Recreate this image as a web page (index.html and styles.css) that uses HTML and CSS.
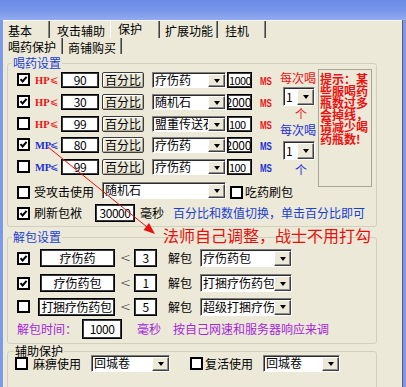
FILE: index.html
```html
<!DOCTYPE html>
<html>
<head>
<meta charset="utf-8">
<link rel="stylesheet" href="styles.css">
</head>
<body>
<div class="win">
  <div class="titlebar"></div>
  <div class="frame">
    <div class="edge-l"></div>
    <div class="client">
      <div class="tabrow r1">
        <div class="tab t1">基本</div>
        <div class="tab t2">攻击辅助</div>
        <div class="tab t3 sel">保护</div>
        <div class="tab t4">扩展功能</div>
        <div class="tab t5">挂机</div>
      </div>
      <div class="tabrow r2">
        <div class="tab s1 sel">喝药保护</div>
        <div class="tab s2">商铺购买</div>
      </div>
      <div class="panel">
        <fieldset class="grp g1">
          <legend class="blue">喝药设置</legend>
          <div class="g1top">
            <div class="lcol">
              <div class="prow h22">
                <span class="cb on"><svg viewBox="0 0 9 9"><path d="M1.5 4.2 L3.6 6.5 L7.6 1.8"/></svg></span>
                <span class="lbl red"><b>HP</b><i>⩽</i></span>
                <span class="inp pct">90</span>
                <span class="btn">百分比</span>
                <span class="combo wc"><span class="val">疗伤药</span><span class="arr"></span></span>
                <span class="inp ms">1000</span>
                <span class="unit red"><b>MS</b></span>
              </div>
              <div class="prow h22">
                <span class="cb on"><svg viewBox="0 0 9 9"><path d="M1.5 4.2 L3.6 6.5 L7.6 1.8"/></svg></span>
                <span class="lbl red"><b>HP</b><i>⩽</i></span>
                <span class="inp pct">30</span>
                <span class="btn">百分比</span>
                <span class="combo wc"><span class="val">随机石</span><span class="arr"></span></span>
                <span class="inp ms scroll">2000</span>
                <span class="unit red"><b>MS</b></span>
              </div>
              <div class="prow h21">
                <span class="cb"></span>
                <span class="lbl red"><b>HP</b><i>⩽</i></span>
                <span class="inp pct">99</span>
                <span class="btn">百分比</span>
                <span class="combo wc"><span class="val">盟重传送石</span><span class="arr"></span></span>
                <span class="inp ms">100</span>
                <span class="unit red"><b>MS</b></span>
              </div>
              <div class="prow h22">
                <span class="cb on"><svg viewBox="0 0 9 9"><path d="M1.5 4.2 L3.6 6.5 L7.6 1.8"/></svg></span>
                <span class="lbl blue2"><b>MP</b><i>⩽</i></span>
                <span class="inp pct">80</span>
                <span class="btn">百分比</span>
                <span class="combo wc"><span class="val">疗伤药</span><span class="arr"></span></span>
                <span class="inp ms scroll">2000</span>
                <span class="unit blue2"><b>MS</b></span>
              </div>
              <div class="prow h23">
                <span class="cb"></span>
                <span class="lbl blue2"><b>MP</b><i>⩽</i></span>
                <span class="inp pct">99</span>
                <span class="btn">百分比</span>
                <span class="combo wc"><span class="val">疗伤药</span><span class="arr"></span></span>
                <span class="inp ms">100</span>
                <span class="unit blue2"><b>MS</b></span>
              </div>
            </div>
            <div class="mcol">
              <span class="mtxt red m1">每次喝</span>
              <span class="combo small mc1"><span class="val">1</span><span class="arr"></span></span>
              <span class="mtxt red ge">个</span>
              <span class="mtxt blue2 m2">每次喝</span>
              <span class="combo small mc2"><span class="val">1</span><span class="arr"></span></span>
              <span class="mtxt blue2 ge ge2">个</span>
            </div>
            <div class="hint">提示：某些服喝药瓶数过多会掉线，请减少喝药瓶数!</div>
          </div>
          <div class="prow r6">
            <span class="cb"></span>
            <span class="txt l6">受攻击使用</span>
            <span class="combo w6"><span class="val">随机石</span><span class="arr"></span></span>
            <span class="cb cb6"></span>
            <span class="txt l6b">吃药刷包</span>
          </div>
          <div class="prow r7">
            <span class="cb on"><svg viewBox="0 0 9 9"><path d="M1.5 4.2 L3.6 6.5 L7.6 1.8"/></svg></span>
            <span class="txt l7">刷新包袱</span>
            <span class="inp i7">30000</span>
            <span class="txt l7b">毫秒</span>
            <span class="txt blue l7c">百分比和数值切换，单击百分比即可</span>
          </div>
        </fieldset>

        <fieldset class="grp g2">
          <legend class="blue">解包设置</legend>
          <div class="urow u1">
            <span class="cb on"><svg viewBox="0 0 9 9"><path d="M1.5 4.2 L3.6 6.5 L7.6 1.8"/></svg></span>
            <span class="box">疗伤药</span>
            <span class="lt">&lt;</span>
            <span class="inp un">3</span>
            <span class="txt jb">解包</span>
            <span class="combo w2"><span class="val">疗伤药包</span><span class="arr"></span></span>
          </div>
          <div class="urow u2">
            <span class="cb on"><svg viewBox="0 0 9 9"><path d="M1.5 4.2 L3.6 6.5 L7.6 1.8"/></svg></span>
            <span class="box">疗伤药包</span>
            <span class="lt">&lt;</span>
            <span class="inp un">1</span>
            <span class="txt jb">解包</span>
            <span class="combo w2"><span class="val">打捆疗伤药包</span><span class="arr"></span></span>
          </div>
          <div class="urow u3">
            <span class="cb"></span>
            <span class="box wide">打捆疗伤药包</span>
            <span class="lt">&lt;</span>
            <span class="inp un">5</span>
            <span class="txt jb">解包</span>
            <span class="combo w2"><span class="val">超级打捆疗伤药包</span><span class="arr"></span></span>
          </div>
          <div class="urow u4">
            <span class="txt purple">解包时间：</span>
            <span class="inp i4">1000</span>
            <span class="txt purple ms4">毫秒</span>
            <span class="txt purple ms5">按自己网速和服务器响应来调</span>
          </div>
        </fieldset>

        <fieldset class="grp g3">
          <legend>辅助保护</legend>
          <div class="arow">
            <span class="cb"></span>
            <span class="txt a1">麻痹使用</span>
            <span class="combo w3a"><span class="val">回城卷</span><span class="arr"></span></span>
            <span class="cb a2"></span>
            <span class="txt a3">复活使用</span>
            <span class="combo w3b"><span class="val">回城卷</span><span class="arr"></span></span>
          </div>
        </fieldset>
      </div>
    </div>
    <div class="edge-r"></div>
  </div>

  <div class="note">法师自己调整，战士不用打勾</div>
  <svg class="arrow" width="406" height="387" viewBox="0 0 406 387">
    <line x1="48" y1="147" x2="147" y2="227" stroke="#e8100c" stroke-width="1"/>
    <polygon points="155,234 143.5,230 149,223" fill="#e8100c"/>
  </svg>
</div>
</body>
</html>
```

FILE: styles.css
```css
* { box-sizing: border-box; }
html, body { margin: 0; padding: 0; }
body {
  width: 406px;
  height: 387px;
  overflow: hidden;
  background: #ece9d8;
  font-family: "Noto Sans CJK SC", "Noto Sans", sans-serif;
  font-size: 12px;
  color: #000;
}
.win { position: relative; width: 406px; height: 387px; display: flex; flex-direction: column; }
.titlebar {
  flex: none;
  height: 20px;
  background: linear-gradient(to bottom, #6a8be6 0%, #7896ea 55%, #93acf0 100%);
}
.frame { flex: 1; display: flex; min-height: 0; }
.edge-l { width: 3px; background: #7d9ae8; flex: none; }
.edge-r { width: 4px; background: #7d9ae8; flex: none; border-left: 1px solid #5f5f5f; }
.client { flex: 1; background: #ece9d8; border-top: 1px solid #fff; min-width: 0; overflow: hidden; }

/* tabs */
.tabrow { display: flex; }
.tabrow.r1 { height: 17px; }
.tabrow.r2 { height: 16px; }
.tab {
  height: 100%;
  line-height: 13px;
  white-space: nowrap;
  border-right: 1px solid #404040;
  box-shadow: inset -1px 0 0 #8a8a80;
  padding-top: 3px;
}
.tab.sel { padding-top: 1px; }
.r2 .tab.sel { padding-top: 2px; }
.t1 { width: 47px; padding-left: 5px; }
.t2 { width: 60px; padding-left: 7px; border-right-color: transparent; box-shadow: none; }
.t3 { width: 50px; padding-left: 7px; border-left: 1px solid #fff; }
.t4 { width: 58px; padding-left: 5px; }
.t5 { width: 48px; padding-left: 7px; }
.s1 { width: 60px; padding-left: 5px; }
.s2 { width: 59px; padding-left: 5px; padding-top: 3px; }

.panel { padding-left: 4px; }

/* group boxes */
.grp {
  margin: 0;
  width: 370px;
  min-width: 0;
  border: 1px solid #d0d0bf;
  border-radius: 3px;
}
.grp legend { padding: 0 1px; line-height: 14px; margin-left: -5px; }
.blue { color: #1a3fd2; }
.blue2 { color: #1a2fd6; }
.red { color: #ee1010; }
.purple { color: #a526d9; }

.g1 { margin-top: 2px; padding: 2px 0 4px 9px; }
.g2 { margin-top: 3px; padding: 5px 0 4px 9px; }
.g3 { margin-top: 2px; padding: 0 0 8px 7px; height: 60px; }
.g3 legend { line-height: 10px; margin-left: -1px; }

.g1top { display: flex; }
.lcol { width: 261px; flex: none; }
.prow { display: flex; align-items: center; }
.lcol .prow { align-items: flex-start; }
.h21 { height: 21px; }
.h22 { height: 22px; }
.h23 { height: 23px; }

/* controls */
.cb {
  flex: none;
  width: 13px;
  height: 13px;
  border: 2px solid #000;
  background: #fff;
  display: flex;
  align-items: center;
  justify-content: center;
}
.lcol .cb { margin-top: 1px; }
.cb svg { width: 9px; height: 9px; fill: none; stroke: #000; stroke-width: 2; }

.lbl { width: 23px; margin-left: 5px; height: 16px; display: flex; align-items: center; white-space: nowrap; }
.lbl b {
  display: inline-block;
  font-family: "Liberation Serif", serif;
  font-weight: bold;
  font-size: 11px;
  line-height: 16px;
  width: 14px;
  transform: scaleX(0.95);
  transform-origin: left center;
}
.lbl i { font-style: normal; font-family: "DejaVu Sans", sans-serif; font-size: 10px; margin-left: 1px; line-height: 16px; }

.inp {
  flex: none;
  background: #fff;
  border: 1px solid #000;
  box-shadow: inset 0 0 0 1px #3a3a3a;
  height: 16px;
  line-height: 14px;
  overflow-x: clip;
  overflow-y: visible;
  white-space: nowrap;
  font-size: 12px;
  letter-spacing: -0.5px;
}
.pct { width: 38px; margin-left: 3px; text-align: center; }
.ms { width: 25px; margin-left: 1px; padding-left: 1px; font-size: 11px; letter-spacing: -0.6px; }
.ms.scroll { direction: rtl; padding-left: 0; padding-right: 0; text-align: left; font-size: 12px; letter-spacing: -0.3px; }
.unit { margin-left: 8px; width: 14px; height: 16px; line-height: 16px; white-space: nowrap; }
.unit b {
  display: inline-block;
  font-family: "Liberation Sans", sans-serif;
  font-weight: bold;
  font-size: 11px;
  transform: scaleX(0.72);
  transform-origin: left center;
}

.btn {
  flex: none;
  width: 42px;
  height: 16px;
  margin-left: 3px;
  border: 1px solid #3c3c3c;
  border-radius: 2px;
  background: #ece9d8;
  box-shadow: inset 1px 1px 0 #fff, inset -1px -1px 0 #aca899;
  text-align: center;
  line-height: 14px;
}

.combo {
  flex: none;
  display: flex;
  height: 16px;
  background: #fff;
  border-top: 1px solid #7f7f7f;
  border-left: 1px solid #7f7f7f;
  border-right: 1px solid #fff;
  border-bottom: 1px solid #fff;
  box-shadow: inset 1px 1px 0 #2a2a2a;
}
.combo .val { flex: 1; min-width: 0; overflow-x: clip; overflow-y: visible; white-space: nowrap; padding-left: 2px; line-height: 14px; }
.combo .arr {
  flex: none;
  width: 17px;
  margin: 1px 0 0 0;
  background: #ece9d8;
  border-top: 1px solid #fff;
  border-left: 1px solid #fff;
  border-right: 1px solid #404040;
  border-bottom: 1px solid #404040;
  box-shadow: inset -1px -1px 0 #8f8f8f;
  display: flex;
  align-items: center;
  justify-content: center;
}
.combo .arr::after {
  content: "";
  border-left: 3.5px solid transparent;
  border-right: 3.5px solid transparent;
  border-top: 4px solid #000;
}
.wc { width: 74px; margin-left: 8px; }

/* middle column */
.mcol { width: 40px; flex: none; display: flex; flex-direction: column; align-items: flex-start; }
.mtxt { line-height: 12px; margin-left: 2px; }
.m1 { margin-top: 0; }
.mc1 { margin-top: 3px; margin-left: 5px; }
.small { width: 32px; height: 19px; }
.small .val { line-height: 17px; padding-left: 2px; }
.ge { margin-left: 17px; margin-top: 2px; }
.m2 { margin-top: 4px; }
.mc2 { margin-top: 5px; margin-left: 5px; }
.ge2 { margin-top: 4px; }

.hint {
  flex: none;
  width: 54px;
  height: 118px;
  margin-top: -3px;
  margin-bottom: -5px;
  border: 1px solid #a7a69a;
  padding: 3px 0 0 1px;
  color: #ee1010;
  font-weight: bold;
  line-height: 12px;
  word-break: break-all;
}

.r6 { height: 22px; align-items: flex-start; }
.r6 > .cb { margin-top: 4px; }
.txt { white-space: nowrap; line-height: 14px; flex: none; }
.l6 { margin-left: 4px; margin-top: 3px; }
.w6 { width: 124px; height: 17px; margin-left: 8px; }
.cb6 { margin-left: 4px; }
.l6b { margin-left: 2px; margin-top: 3px; }

.r7 { height: 18px; }
.l7 { margin-left: 4px; }
.i7 { width: 40px; height: 18px; margin-left: 13px; text-align: center; line-height: 16px; }
.l7b { margin-left: 5px; }
.l7c { margin-left: 9px; }

/* unpack group */
.urow { display: flex; align-items: center; height: 18px; }
.u2 { margin-top: 7px; }
.u3 { margin-top: 5px; height: 19px; }
.u4 { margin-top: 3px; height: 20px; }
.box {
  flex: none;
  width: 75px;
  height: 18px;
  margin-left: 10px;
  background: #fff;
  border: 1px solid #000;
  box-shadow: inset 0 0 0 1px #3a3a3a;
  text-align: center;
  line-height: 16px;
  white-space: nowrap;
  overflow-x: clip;
  overflow-y: visible;
}
.box.wide { width: 77px; margin-left: 8px; letter-spacing: -0.3px; }
.lt { width: 8px; margin-left: 5px; font-family: "DejaVu Sans", sans-serif; font-size: 13px; font-weight: 200; line-height: 14px; color: #222; }
.un { width: 23px; height: 18px; margin-left: 6px; text-align: center; line-height: 16px; }
.jb { margin-left: 11px; }
.w2 { width: 92px; height: 18px; margin-left: 8px; }
.w2 .val { line-height: 16px; }
.i4 { width: 40px; height: 20px; margin-left: 5px; text-align: center; line-height: 18px; }
.ms4 { margin-left: 15px; }
.ms5 { margin-left: 12px; }

/* aux group */
.arow { display: flex; align-items: center; height: 17px; margin-top: -1px; }
.a1 { margin-left: 5px; }
.w3a { width: 79px; height: 17px; margin-left: 10px; }
.a2 { margin-left: 20px; }
.a3 { margin-left: 2px; }
.w3b { width: 77px; height: 17px; margin-left: 10px; }

/* overlays */
.note {
  position: absolute;
  left: 163px;
  top: 226px;
  font-size: 16px;
  line-height: 18px;
  color: #e8100c;
  white-space: nowrap;
}
.arrow { position: absolute; left: 0; top: 0; pointer-events: none; }
```
